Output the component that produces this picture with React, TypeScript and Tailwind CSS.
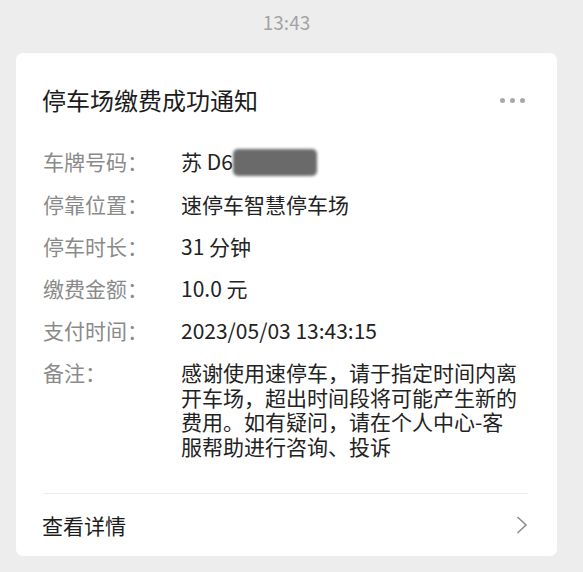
import React from "react";

const rows: [string, string][] = [
  ["停靠位置：", "速停车智慧停车场"],
  ["停车时长：", "31 分钟"],
  ["缴费金额：", "10.0 元"],
  ["支付时间：", "2023/05/03 13:43:15"],
];

export default function App() {
  return (
    <div
      className="w-[583px] h-[572px] bg-[#ededed] flex flex-col pl-[16px]"
      style={{ fontFamily: '"Noto Sans CJK SC", "Noto Sans", sans-serif' }}
    >
      <div className="w-[541px] h-[53px] flex justify-center pt-[9px]">
        <span className="text-[19px] leading-[26px] text-[#a3a3a3]">13:43</span>
      </div>
      <div className="w-[541px] bg-white rounded-[7px] flex flex-col pl-[27px] pr-[29px]">
        <div className="flex items-center justify-between pt-[32px] mb-[34px] h-[30px] box-content">
          <div className="text-[24px] leading-[30px] text-[#1c1c1c] -ml-[1px]">停车场缴费成功通知</div>
          <div className="flex gap-[5px] mr-[3px]">
            <span className="w-[5px] h-[5px] rounded-full bg-[#a8a8a8]" />
            <span className="w-[5px] h-[5px] rounded-full bg-[#a8a8a8]" />
            <span className="w-[5px] h-[5px] rounded-full bg-[#a8a8a8]" />
          </div>
        </div>
        <div className="flex flex-col text-[21px] gap-[16.25px]">
          <div className="flex h-[26px] items-center">
            <div className="w-[138px] text-[#8a8a8a]">车牌号码：</div>
            <div className="relative text-[#222] flex items-center">
              <span>苏 D6</span>
              <span className="ml-[0px] w-[84px] h-[27px] rounded-[5px] bg-[#6a6a6a] blur-[1.5px]" />
            </div>
          </div>
          {rows.map(([k, v]) => (
            <div key={k} className="flex h-[26px] items-center">
              <div className="w-[138px] text-[#8a8a8a]">{k}</div>
              <div className="text-[#222]">{v}</div>
            </div>
          ))}
          <div className="flex">
            <div className="w-[138px] text-[#8a8a8a] leading-[24.5px]">备注：</div>
            <div className="w-[341px] text-[#222] leading-[24.5px]">
              感谢使用速停车，请于指定时间内离开车场，超出时间段将可能产生新的费用。如有疑问，请在个人中心-客服帮助进行咨询、投诉
            </div>
          </div>
        </div>
        <div className="mt-[35px] h-[1px] bg-[#ececec]" />
        <div className="flex items-center justify-between h-[62px]">
          <div className="text-[21px] text-[#1c1c1c] -ml-[1px]">查看详情</div>
          <svg width="12" height="18" viewBox="0 0 12 18" className="mr-[0px]">
            <path d="M1.5 1 L10 9 L1.5 17" fill="none" stroke="#8f8f8f" strokeWidth="1.6" />
          </svg>
        </div>
      </div>
    </div>
  );
}
